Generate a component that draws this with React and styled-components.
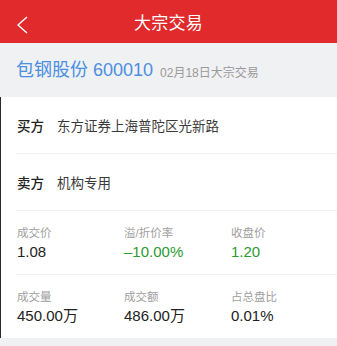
import styled, { createGlobalStyle } from 'styled-components';

const GlobalStyle = createGlobalStyle`
  html, body {
    margin: 0;
    padding: 0;
    background: #f0f1f3;
    font-family: "Liberation Sans", "Noto Sans CJK SC", sans-serif;
  }
`;

const Page = styled.div`
  width: 337px;
  height: 346px;
  background: #f0f1f3;
  overflow: hidden;
`;

const Header = styled.header`
  height: 43px;
  background: #e02a2b;
  display: flex;
  align-items: center;
  justify-content: center;
  position: relative;
`;

const BackButton = styled.button`
  position: absolute;
  left: 16px;
  top: 16px;
  width: 13px;
  height: 18px;
  padding: 0;
  border: none;
  background: transparent;
  display: flex;
  align-items: center;
  justify-content: center;
`;

const HeaderTitle = styled.h1`
  margin: 0;
  color: #fff;
  font-size: 17px;
  font-weight: 400;
  letter-spacing: 0.3px;
`;

const StockBar = styled.div`
  height: 54px;
  display: flex;
  align-items: center;
  padding: 0 16px;
  gap: 7px;
`;

const StockName = styled.span`
  color: #4a8fe2;
  font-size: 18px;
  line-height: 20px;
`;

const StockDate = styled.span`
  color: #9a9a9a;
  font-size: 12px;
  margin-top: 3px;
`;

const Card = styled.section`
  background: #fff;
  border-left: 1px solid #2b2b2b;
`;

const PartyRow = styled.div`
  height: 56px;
  display: flex;
  align-items: center;
  margin-left: 15px;
  padding-left: 1px;
  border-bottom: 1px solid #f0f0f0;
  font-size: 13.5px;
`;

const PartyLabel = styled.span`
  color: #222;
  font-weight: 500;
  width: 40px;
`;

const PartyValue = styled.span`
  color: #3a3a3a;
  font-size: 13.5px;
`;

const StatsRow = styled.div`
  display: grid;
  grid-template-columns: repeat(3, 107px);
  margin-left: 15px;
  padding-left: 1px;
  border-bottom: ${({ $last }) => ($last ? 'none' : '1px solid #f0f0f0')};
`;

const StatCell = styled.div`
  padding: 13px 0 12px;
  display: flex;
  flex-direction: column;
`;

const StatLabel = styled.span`
  color: #a0a0a0;
  font-size: 11.5px;
  line-height: 18px;
`;

const StatValue = styled.span`
  color: ${({ $tone }) => ($tone === 'green' ? '#2b9a2f' : '#222')};
  font-size: 15px;
  line-height: 20px;
`;

const stats = [
  [
    { label: '成交价', value: '1.08' },
    { label: '溢/折价率', value: '–10.00%', tone: 'green' },
    { label: '收盘价', value: '1.20', tone: 'green' },
  ],
  [
    { label: '成交量', value: '450.00万' },
    { label: '成交额', value: '486.00万' },
    { label: '占总盘比', value: '0.01%' },
  ],
];

export default function App() {
  return (
    <Page>
      <GlobalStyle />
      <Header>
        <BackButton aria-label="返回">
          <svg width="13" height="18" viewBox="0 0 13 18">
            <path d="M11 1 L2 9 L11 17" fill="none" stroke="#fff" strokeWidth="1.4" />
          </svg>
        </BackButton>
        <HeaderTitle>大宗交易</HeaderTitle>
      </Header>
      <StockBar>
        <StockName>包钢股份 600010</StockName>
        <StockDate>02月18日大宗交易</StockDate>
      </StockBar>
      <Card>
        <PartyRow>
          <PartyLabel>买方</PartyLabel>
          <PartyValue>东方证券上海普陀区光新路</PartyValue>
        </PartyRow>
        <PartyRow>
          <PartyLabel>卖方</PartyLabel>
          <PartyValue>机构专用</PartyValue>
        </PartyRow>
        {stats.map((row, i) => (
          <StatsRow key={i} $last={i === stats.length - 1}>
            {row.map((s) => (
              <StatCell key={s.label}>
                <StatLabel>{s.label}</StatLabel>
                <StatValue $tone={s.tone}>{s.value}</StatValue>
              </StatCell>
            ))}
          </StatsRow>
        ))}
      </Card>
    </Page>
  );
}
